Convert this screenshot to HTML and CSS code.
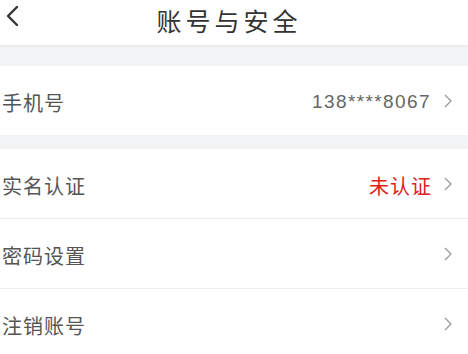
FILE: index.html
```html
<!DOCTYPE html>
<html lang="zh-CN">
<head>
    <meta charset="UTF-8">
    <meta name="viewport" content="width=device-width, initial-scale=1.0">
    <title>账号与安全</title>
    <link rel="stylesheet" href="styles.css">
</head>
<body>
    <div class="page">
        <div class="header">
            <span class="back">
                <svg width="16" height="22" viewBox="0 0 16 22"><path d="M13 2 L4 11 L13 20" fill="none" stroke="#333" stroke-width="2.4" stroke-linecap="round" stroke-linejoin="round"/></svg>
            </span>
            <h1 class="title">账号与安全</h1>
        </div>

        <div class="group">
            <div class="row">
                <span class="label">手机号</span>
                <span class="value">138****8067</span>
                <span class="arrow"><svg width="8" height="14" viewBox="0 0 8 14"><path d="M1 1 L7 7 L1 13" fill="none" stroke="#999" stroke-width="1.3"/></svg></span>
            </div>
        </div>

        <div class="group gap-small">
            <div class="row">
                <span class="label">实名认证</span>
                <span class="value warn">未认证</span>
                <span class="arrow"><svg width="8" height="14" viewBox="0 0 8 14"><path d="M1 1 L7 7 L1 13" fill="none" stroke="#999" stroke-width="1.3"/></svg></span>
            </div>
            <div class="row">
                <span class="label">密码设置</span>
                <span class="arrow"><svg width="8" height="14" viewBox="0 0 8 14"><path d="M1 1 L7 7 L1 13" fill="none" stroke="#999" stroke-width="1.3"/></svg></span>
            </div>
            <div class="row">
                <span class="label">注销账号</span>
                <span class="arrow"><svg width="8" height="14" viewBox="0 0 8 14"><path d="M1 1 L7 7 L1 13" fill="none" stroke="#999" stroke-width="1.3"/></svg></span>
            </div>
        </div>
    </div>
</body>
</html>
```

FILE: styles.css
```css
* {
    margin: 0;
    padding: 0;
    box-sizing: border-box;
}

html, body {
    width: 100%;
    height: 100%;
}

body {
    font-family: "Noto Sans CJK SC", "Liberation Sans", sans-serif;
    background-color: #f2f3f5;
    overflow: hidden;
}

.page {
    display: flex;
    flex-direction: column;
}

.header {
    height: 45px;
    background-color: #fff;
    display: flex;
    align-items: center;
    justify-content: center;
    position: relative;
    box-shadow: 0 1px 3px rgba(0, 0, 0, 0.06);
}

.back {
    position: absolute;
    left: 4px;
    top: 5px;
}

.title {
    font-size: 25px;
    font-weight: normal;
    color: #333;
    letter-spacing: 4px;
    margin-right: 10px;
    margin-top: -6px;
}

.group {
    margin-top: 21px;
    background-color: #fff;
}

.group.gap-small {
    margin-top: 14px;
}

.row {
    height: 70px;
    display: flex;
    align-items: center;
    padding: 3px 16px 0 2px;
    border-top: 1px solid #ececec;
}

.row:first-child {
    border-top: none;
    height: 69px;
}

.label {
    flex: 1;
    font-size: 20px;
    color: #555;
    letter-spacing: 1px;
}

.value {
    font-size: 19px;
    color: #666;
    margin-right: 13px;
    font-family: "Liberation Sans", sans-serif;
    letter-spacing: 1.4px;
}

.value.warn {
    font-family: "Noto Sans CJK SC", sans-serif;
    color: #e0201c;
    font-size: 20px;
    letter-spacing: 1px;
    margin-right: 12px;
}

.arrow {
    display: flex;
    align-items: center;
    margin-top: -3px;
}
```
